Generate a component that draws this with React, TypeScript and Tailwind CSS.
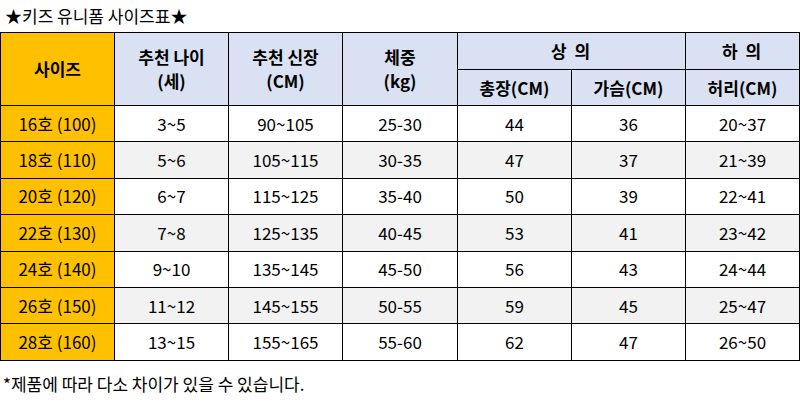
const rows = [
  ["16호 (100)", "3~5", "90~105", "25-30", "44", "36", "20~37"],
  ["18호 (110)", "5~6", "105~115", "30-35", "47", "37", "21~39"],
  ["20호 (120)", "6~7", "115~125", "35-40", "50", "39", "22~41"],
  ["22호 (130)", "7~8", "125~135", "40-45", "53", "41", "23~42"],
  ["24호 (140)", "9~10", "135~145", "45-50", "56", "43", "24~44"],
  ["26호 (150)", "11~12", "145~155", "50-55", "59", "45", "25~47"],
  ["28호 (160)", "13~15", "155~165", "55-60", "62", "47", "26~50"],
];

export default function App() {
  return (
    <div
      className="w-[800px] h-[409px] bg-white text-black"
      style={{ fontFamily: '"Noto Sans CJK KR", "Noto Sans", sans-serif' }}
    >
      {/* Title */}
      <div className="h-[32px] pl-[5px] pt-[4px] text-[17px] leading-[24px]">★키즈 유니폼 사이즈표★</div>

      {/* Table */}
      <table className="w-[799px] table-fixed border-collapse text-center">
        <colgroup>
          <col className="w-[114px]" />
          <col className="w-[114px]" />
          <col className="w-[114px]" />
          <col className="w-[115px]" />
          <col className="w-[114px]" />
          <col className="w-[114px]" />
          <col className="w-[114px]" />
        </colgroup>
        <thead className="text-[17px] font-bold leading-[24px]">
          <tr className="h-[37px]">
            <th rowSpan={2} className="border border-black bg-[#ffc000]">사이즈</th>
            <th rowSpan={2} className="border border-black bg-[#d9e1f2]">
              추천 나이
              <br />
              (세)
            </th>
            <th rowSpan={2} className="border border-black bg-[#d9e1f2]">
              추천 신장
              <br />
              (CM)
            </th>
            <th rowSpan={2} className="border border-black bg-[#d9e1f2]">
              체중
              <br />
              (kg)
            </th>
            <th colSpan={2} className="border border-black bg-[#d9e1f2] tracking-[2px]">상 의</th>
            <th className="border border-black bg-[#d9e1f2] tracking-[2px]">하 의</th>
          </tr>
          <tr className="h-[36px]">
            <th className="border border-black bg-[#d9e1f2]">총장(CM)</th>
            <th className="border border-black bg-[#d9e1f2]">가슴(CM)</th>
            <th className="border border-black bg-[#d9e1f2]">허리(CM)</th>
          </tr>
        </thead>
        <tbody className="text-[17px] leading-[22px]">
          {rows.map((r, i) => (
            <tr key={r[0]} className={i % 2 === 1 ? "h-[36.4px] bg-[#f2f2f2]" : "h-[36.4px] bg-white"}>
              {r.map((c, j) => (
                <td key={j} className={j === 0 ? "border border-black bg-[#ffc000]" : "border border-black"}>
                  {c}
                </td>
              ))}
            </tr>
          ))}
        </tbody>
      </table>

      {/* Note */}
      <div className="pl-[3px] pt-[12px] text-[17px] leading-[22px]">*제품에 따라 다소 차이가 있을 수 있습니다.</div>
    </div>
  );
}
